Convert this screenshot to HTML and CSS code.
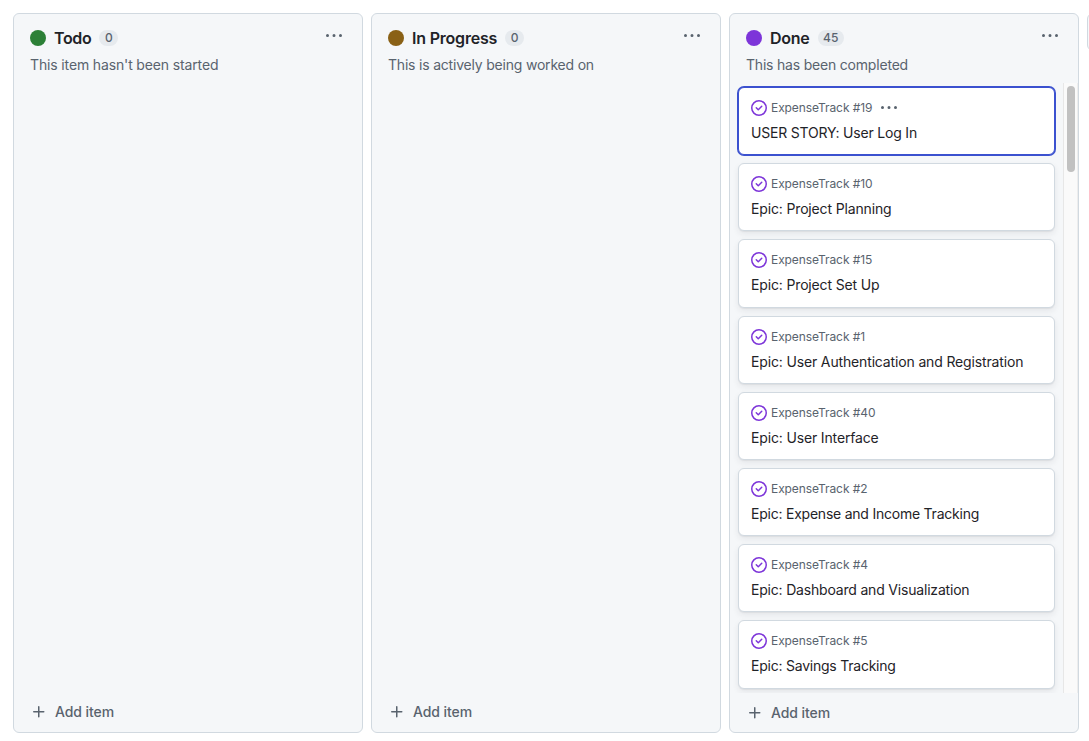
FILE: index.html
```html
<!DOCTYPE html>
<html lang="en">
<head>
<meta charset="utf-8">
<title>Project board</title>
<link rel="stylesheet" href="styles.css">
</head>
<body>
<svg class="defs" width="0" height="0" aria-hidden="true">
  <symbol id="dots" viewBox="0 0 16 16"><path d="M8 9a1.5 1.5 0 1 0 0-3 1.5 1.5 0 0 0 0 3ZM1.5 9a1.5 1.5 0 1 0 0-3 1.5 1.5 0 0 0 0 3Zm13 0a1.5 1.5 0 1 0 0-3 1.5 1.5 0 0 0 0 3Z"/></symbol>
  <symbol id="plus" viewBox="0 0 16 16"><path d="M7.75 2a.75.75 0 0 1 .75.75V7h4.25a.75.75 0 0 1 0 1.5H8.5v4.25a.75.75 0 0 1-1.5 0V8.5H2.75a.75.75 0 0 1 0-1.5H7V2.75A.75.75 0 0 1 7.75 2Z"/></symbol>
  <symbol id="closed" viewBox="0 0 16 16"><path d="M11.28 6.78a.75.75 0 0 0-1.06-1.06L7.25 8.69 5.78 7.22a.75.75 0 0 0-1.06 1.06l2 2a.75.75 0 0 0 1.06 0l3.5-3.5Z"/><path d="M16 8A8 8 0 1 1 0 8a8 8 0 0 1 16 0Zm-1.5 0a6.5 6.5 0 1 0-13 0 6.5 6.5 0 0 0 13 0Z"/></symbol>
</svg>
<main class="board">
  <section class="column">
    <header class="head">
      <div class="title-row"><span class="dot green"></span><h2 class="t-todo">Todo</h2><span class="count">0</span><svg class="menu"><use href="#dots"/></svg></div>
      <p class="desc d-todo">This item hasn't been started</p>
    </header>
    <div class="cards"></div>
    <footer class="add"><svg class="plus"><use href="#plus"/></svg><span>Add item</span></footer>
  </section>
  <section class="column">
    <header class="head">
      <div class="title-row"><span class="dot brown"></span><h2 class="t-progress">In Progress</h2><span class="count">0</span><svg class="menu"><use href="#dots"/></svg></div>
      <p class="desc">This is actively being worked on</p>
    </header>
    <div class="cards"></div>
    <footer class="add"><svg class="plus"><use href="#plus"/></svg><span>Add item</span></footer>
  </section>
  <section class="column">
    <header class="head">
      <div class="title-row"><span class="dot purple"></span><h2 class="t-done">Done</h2><span class="count">45</span><svg class="menu"><use href="#dots"/></svg></div>
      <p class="desc">This has been completed</p>
    </header>
    <div class="scroller">
      <div class="list">
        <article class="card selected"><div class="meta"><svg class="status"><use href="#closed"/></svg><span>ExpenseTrack #19</span><svg class="more"><use href="#dots"/></svg></div><h3 class="tight">USER STORY: User Log In</h3></article>
        <article class="card"><div class="meta"><svg class="status"><use href="#closed"/></svg><span>ExpenseTrack #10</span></div><h3>Epic: Project Planning</h3></article>
        <article class="card"><div class="meta"><svg class="status"><use href="#closed"/></svg><span>ExpenseTrack #15</span></div><h3>Epic: Project Set Up</h3></article>
        <article class="card"><div class="meta"><svg class="status"><use href="#closed"/></svg><span>ExpenseTrack #1</span></div><h3>Epic: User Authentication and Registration</h3></article>
        <article class="card"><div class="meta"><svg class="status"><use href="#closed"/></svg><span>ExpenseTrack #40</span></div><h3>Epic: User Interface</h3></article>
        <article class="card"><div class="meta"><svg class="status"><use href="#closed"/></svg><span>ExpenseTrack #2</span></div><h3 class="tighter">Epic: Expense and Income Tracking</h3></article>
        <article class="card"><div class="meta"><svg class="status"><use href="#closed"/></svg><span>ExpenseTrack #4</span></div><h3 class="tight">Epic: Dashboard and Visualization</h3></article>
        <article class="card"><div class="meta"><svg class="status"><use href="#closed"/></svg><span>ExpenseTrack #5</span></div><h3 class="tighter">Epic: Savings Tracking</h3></article>
      </div>
      <div class="track"><div class="thumb"></div></div>
    </div>
    <footer class="add low"><svg class="plus"><use href="#plus"/></svg><span>Add item</span></footer>
  </section>
  <div class="new-column"></div>
</main>
</body>
</html>
```

FILE: styles.css
```css
* { box-sizing: border-box; }
body {
  margin: 0;
  height: 741px;
  overflow: hidden;
  background: #fff;
  color: #1f2328;
  font-family: Inter, "Liberation Sans", sans-serif;
  font-size: 14px;
}
h2, h3, p { margin: 0; }
svg { display: block; flex: none; width: 16px; height: 16px; fill: #59636e; }
.defs { position: absolute; width: 0; height: 0; }
.board { display: flex; gap: 8px; padding: 13px 0 0 13px; width: 100%; overflow: hidden; }
.column {
  display: flex;
  flex-direction: column;
  flex: none;
  width: 350px;
  height: 720px;
  border: 1px solid #d1d9e0;
  border-radius: 6px;
  background: #f5f7f9;
}
.head { flex: none; height: 69px; padding: 12px 16px 0; }
.title-row { display: flex; align-items: center; height: 24px; }
.dot { width: 16px; height: 16px; border-radius: 50%; margin-right: 8px; }
.green { background: #2c8037; }
.brown { background: #8a6116; }
.purple { background: #7d35d9; }
h2 { font-size: 16px; line-height: 24px; font-weight: 600; white-space: nowrap; }
.t-todo { letter-spacing: -0.35px; }
.t-progress { letter-spacing: -0.2px; }
.t-done { letter-spacing: -0.25px; }
.count {
  margin-left: 8px;
  padding: 0 5.5px;
  height: 16px;
  border-radius: 8px;
  background: #e6eaee;
  color: #59636e;
  font-size: 12px;
  line-height: 16px;
  font-weight: 500;
}
.menu { margin-left: auto; margin-right: 4px; margin-top: -4px; }
.desc { margin-top: 5px; line-height: 20px; color: #59636e; letter-spacing: -0.2px; white-space: nowrap; }
.d-todo { letter-spacing: -0.14px; }
.cards { flex: 1; }
.add {
  display: flex;
  align-items: center;
  gap: 8px;
  flex: none;
  height: 39px;
  padding: 0 17px 2px;
  color: #59636e;
  font-weight: 500;
  line-height: 20px;
  letter-spacing: -0.08px;
}
.low { padding-bottom: 0; }
.scroller { display: flex; flex: 1; min-height: 0; overflow: hidden; }
.list { display: flex; flex-direction: column; gap: 8px; width: 333px; padding: 4px 8px 0; }
.card {
  flex: none;
  height: 68.2px;
  border: 1px solid #d1d9e0;
  border-radius: 6px;
  background: #fff;
  padding: 10px 12px;
  box-shadow: 0 1px 1px rgba(37, 41, 46, .06), 0 3px 6px rgba(37, 41, 46, .08);
}
.selected { border-color: #3b51cf; box-shadow: 0 0 0 1px #3b51cf; }
.meta { display: flex; align-items: center; height: 20px; color: #59636e; font-size: 12px; line-height: 20px; }
.meta span { margin-left: 4px; letter-spacing: -0.08px; }
.status { fill: #7d35d9; }
.more { margin-left: 8.5px; }
h3 { margin-top: 5px; font-size: 14px; line-height: 20px; font-weight: 400; letter-spacing: -0.15px; white-space: nowrap; }
.tight { letter-spacing: -0.19px; }
.tighter { letter-spacing: -0.23px; }
.track { width: 15px; padding: 3px 3px 0; background: #fafafa; border-left: 1px solid #e7e7e7; border-right: 1px solid #ededed; }
.thumb { width: 8px; height: 86px; border-radius: 4px; background: #c1c1c1; }
.new-column { flex: none; width: 34px; height: 38px; border: 1px solid #d1d9e0; border-radius: 6px; background: #f6f8fa; }
```
